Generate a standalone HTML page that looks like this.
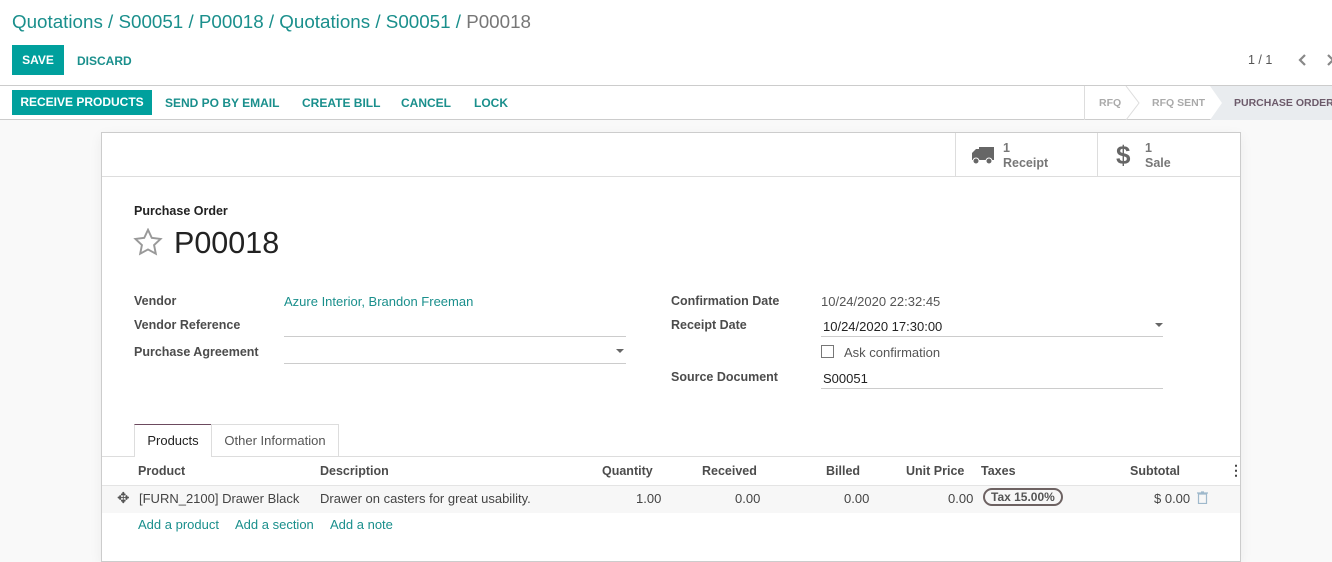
<!DOCTYPE html>
<html><head><meta charset="utf-8"><style>
*{box-sizing:border-box;margin:0;padding:0}
body{width:1332px;height:545px;overflow:hidden;background:#f9f9f9;font-family:"Liberation Sans",sans-serif;font-size:13px;color:#4c4c4c;position:relative}
.a{position:absolute;white-space:nowrap}
.t{color:#1a8f8c}
.b{font-weight:bold}
.lbl{font-weight:bold;color:#4c4c4c;font-size:12.5px}
.hd{font-weight:bold;color:#4c4c4c;font-size:12.5px}
.ln{position:absolute;height:1px;background:#ccc}
</style></head><body>
<div class="a" style="left:0;top:0;width:1332px;height:86px;background:#fff;border-bottom:1px solid #ccc"></div>
<div class="a t" style="left:12px;top:11px;font-size:18.8px">Quotations / S00051 / P00018 / Quotations / S00051 / <span style="color:#777">P00018</span></div>
<div class="a b" style="left:12px;top:45px;width:52px;height:30px;background:#00a09d;color:#fff;font-size:12px;line-height:30px;text-align:center">SAVE</div>
<div class="a b t" style="left:77px;top:54px;font-size:12px">DISCARD</div>
<div class="a" style="left:1248px;top:53px;font-size:12.5px;color:#555">1 / 1</div>
<svg class="a" style="left:1298px;top:54px" width="10" height="12"><path d="M7 1L2 6l5 5" fill="none" stroke="#888" stroke-width="2.2"/></svg>
<svg class="a" style="left:1326px;top:54px" width="10" height="12"><path d="M2 1l5 5-5 5" fill="none" stroke="#888" stroke-width="2.2"/></svg>
<div class="a" style="left:0;top:86px;width:1332px;height:34px;background:#fff;border-bottom:1px solid #ccc"></div>
<div class="a b" style="left:12px;top:90px;width:140px;height:25px;background:#00a09d;color:#fff;font-size:12px;line-height:25px;text-align:center">RECEIVE PRODUCTS</div>
<div class="a b t" style="left:165px;top:96px;font-size:12px">SEND PO BY EMAIL</div>
<div class="a b t" style="left:302px;top:96px;font-size:12px">CREATE BILL</div>
<div class="a b t" style="left:401px;top:96px;font-size:12px">CANCEL</div>
<div class="a b t" style="left:474px;top:96px;font-size:12px">LOCK</div>
<div class="a" style="left:1084px;top:86px;width:1px;height:34px;background:#ddd"></div>
<div class="a b" style="left:1099px;top:97px;font-size:10.5px;color:#aaa">RFQ</div>
<svg class="a" style="left:1125px;top:86px" width="16" height="34"><path d="M1 0L14 17L1 34" fill="none" stroke="#ddd"/></svg>
<div class="a b" style="left:1152px;top:97px;font-size:10.5px;color:#aaa">RFQ SENT</div>
<svg class="a" style="left:1210px;top:86px" width="122" height="34"><path d="M0 0L12 17L0 34H122V0Z" fill="#e9ecef"/></svg>
<div class="a b" style="left:1234px;top:97px;font-size:10.5px;color:#6c5a6a">PURCHASE ORDER</div>
<div class="a" style="left:101px;top:132px;width:1140px;height:430px;background:#fff;border:1px solid #ccc;box-shadow:0 4px 12px rgba(0,0,0,.06)"></div>
<div class="ln" style="left:102px;top:176px;width:1138px;background:#ddd"></div>
<div class="a" style="left:955px;top:133px;width:1px;height:43px;background:#ddd"></div>
<div class="a" style="left:1097px;top:133px;width:1px;height:43px;background:#ddd"></div>
<svg class="a" style="left:971px;top:146px" width="24" height="20" viewBox="0 0 24 20"><path d="M8 1h15v13H8z M1 7l4-4h4v11H1z" fill="#666"/><circle cx="5" cy="15" r="3" fill="#666" stroke="#fff"/><circle cx="18" cy="15" r="3" fill="#666" stroke="#fff"/></svg>
<div class="a b" style="left:1003px;top:141px;color:#777;font-size:12.5px;line-height:15px">1<br>Receipt</div>
<div class="a b" style="left:1116px;top:140px;color:#666;font-size:26px">$</div>
<div class="a b" style="left:1145px;top:141px;color:#777;font-size:12.5px;line-height:15px">1<br>Sale</div>
<div class="a b" style="left:134px;top:204px;font-size:12.5px;color:#222">Purchase Order</div>
<svg class="a" style="left:133px;top:228px" width="30" height="28" viewBox="0 0 24 23"><path d="M12 1.5l3.1 6.6 7.2.9-5.3 5 1.4 7.1L12 17.6l-6.4 3.5L7 14l-5.3-5 7.2-.9z" fill="none" stroke="#999" stroke-width="1.6"/></svg>
<div class="a" style="left:174px;top:226px;font-size:30.5px;color:#222">P00018</div>
<div class="a lbl" style="left:134px;top:294px">Vendor</div>
<div class="a t" style="left:284px;top:294px">Azure Interior, Brandon Freeman</div>
<div class="a lbl" style="left:134px;top:318px">Vendor Reference</div>
<div class="ln" style="left:284px;top:336px;width:342px"></div>
<div class="a lbl" style="left:134px;top:345px">Purchase Agreement</div>
<div class="a" style="left:616px;top:349px;border:4px solid transparent;border-top-color:#666"></div>
<div class="ln" style="left:284px;top:363px;width:342px"></div>
<div class="a lbl" style="left:671px;top:294px">Confirmation Date</div>
<div class="a" style="left:821px;top:294px;color:#555">10/24/2020 22:32:45</div>
<div class="a lbl" style="left:671px;top:318px">Receipt Date</div>
<div class="a" style="left:823px;top:319px;color:#222">10/24/2020 17:30:00</div>
<div class="a" style="left:1155px;top:323px;border:4px solid transparent;border-top-color:#666"></div>
<div class="ln" style="left:821px;top:336px;width:342px"></div>
<div class="a" style="left:821px;top:345px;width:13px;height:13px;border:1px solid #777"></div>
<div class="a" style="left:844px;top:345px;color:#555">Ask confirmation</div>
<div class="a lbl" style="left:671px;top:370px">Source Document</div>
<div class="a" style="left:823px;top:371px;color:#222">S00051</div>
<div class="ln" style="left:821px;top:388px;width:342px"></div>
<div class="ln" style="left:102px;top:456px;width:1138px;background:#ddd"></div>
<div class="a" style="left:134px;top:424px;width:78px;height:33px;background:#fff;border:1px solid #ddd;border-top:1px solid #6c4a5e;border-bottom:none;color:#222;text-align:center;line-height:31px">Products</div>
<div class="a" style="left:211px;top:424px;width:128px;height:32px;border:1px solid #ddd;border-bottom:none;color:#555;text-align:center;line-height:31px">Other Information</div>
<div class="a hd" style="left:138px;top:464px">Product</div>
<div class="a hd" style="left:320px;top:464px">Description</div>
<div class="a hd" style="left:602px;top:464px">Quantity</div>
<div class="a hd" style="left:702px;top:464px">Received</div>
<div class="a hd" style="left:826px;top:464px">Billed</div>
<div class="a hd" style="left:906px;top:464px">Unit Price</div>
<div class="a hd" style="left:981px;top:464px">Taxes</div>
<div class="a hd" style="left:1130px;top:464px">Subtotal</div>
<div class="a b" style="left:1229px;top:462px;font-size:14px;color:#444">&#8942;</div>
<div class="a" style="left:102px;top:485px;width:1138px;height:28px;background:#f7f7f7;border-top:1px solid #e4e4e4"></div>
<div class="a" style="left:117px;top:489px;font-size:15px;color:#555">&#10021;</div>
<div class="a" style="left:139px;top:491px;color:#444">[FURN_2100] Drawer Black</div>
<div class="a" style="left:320px;top:491px;color:#444">Drawer on casters for great usability.</div>
<div class="a" style="left:636px;top:491px;color:#444">1.00</div>
<div class="a" style="left:735px;top:491px;color:#444">0.00</div>
<div class="a" style="left:844px;top:491px;color:#444">0.00</div>
<div class="a" style="left:948px;top:491px;color:#444">0.00</div>
<div class="a b" style="left:983px;top:488px;height:18px;padding:0 6px;border:2px solid #6d6262;border-radius:10px;font-size:12px;line-height:14px;color:#555">Tax 15.00%</div>
<div class="a" style="left:1154px;top:491px;color:#444">$ 0.00</div>
<svg class="a" style="left:1197px;top:491px" width="11" height="13" viewBox="0 0 11 13"><path d="M0 2h11M4 1h3M1.5 3h8v9.5h-8z" fill="none" stroke="#9fb9cc" stroke-width="1.2"/></svg>
<div class="a t" style="left:138px;top:517px">Add a product</div>
<div class="a t" style="left:235px;top:517px">Add a section</div>
<div class="a t" style="left:330px;top:517px">Add a note</div>
</body></html>
